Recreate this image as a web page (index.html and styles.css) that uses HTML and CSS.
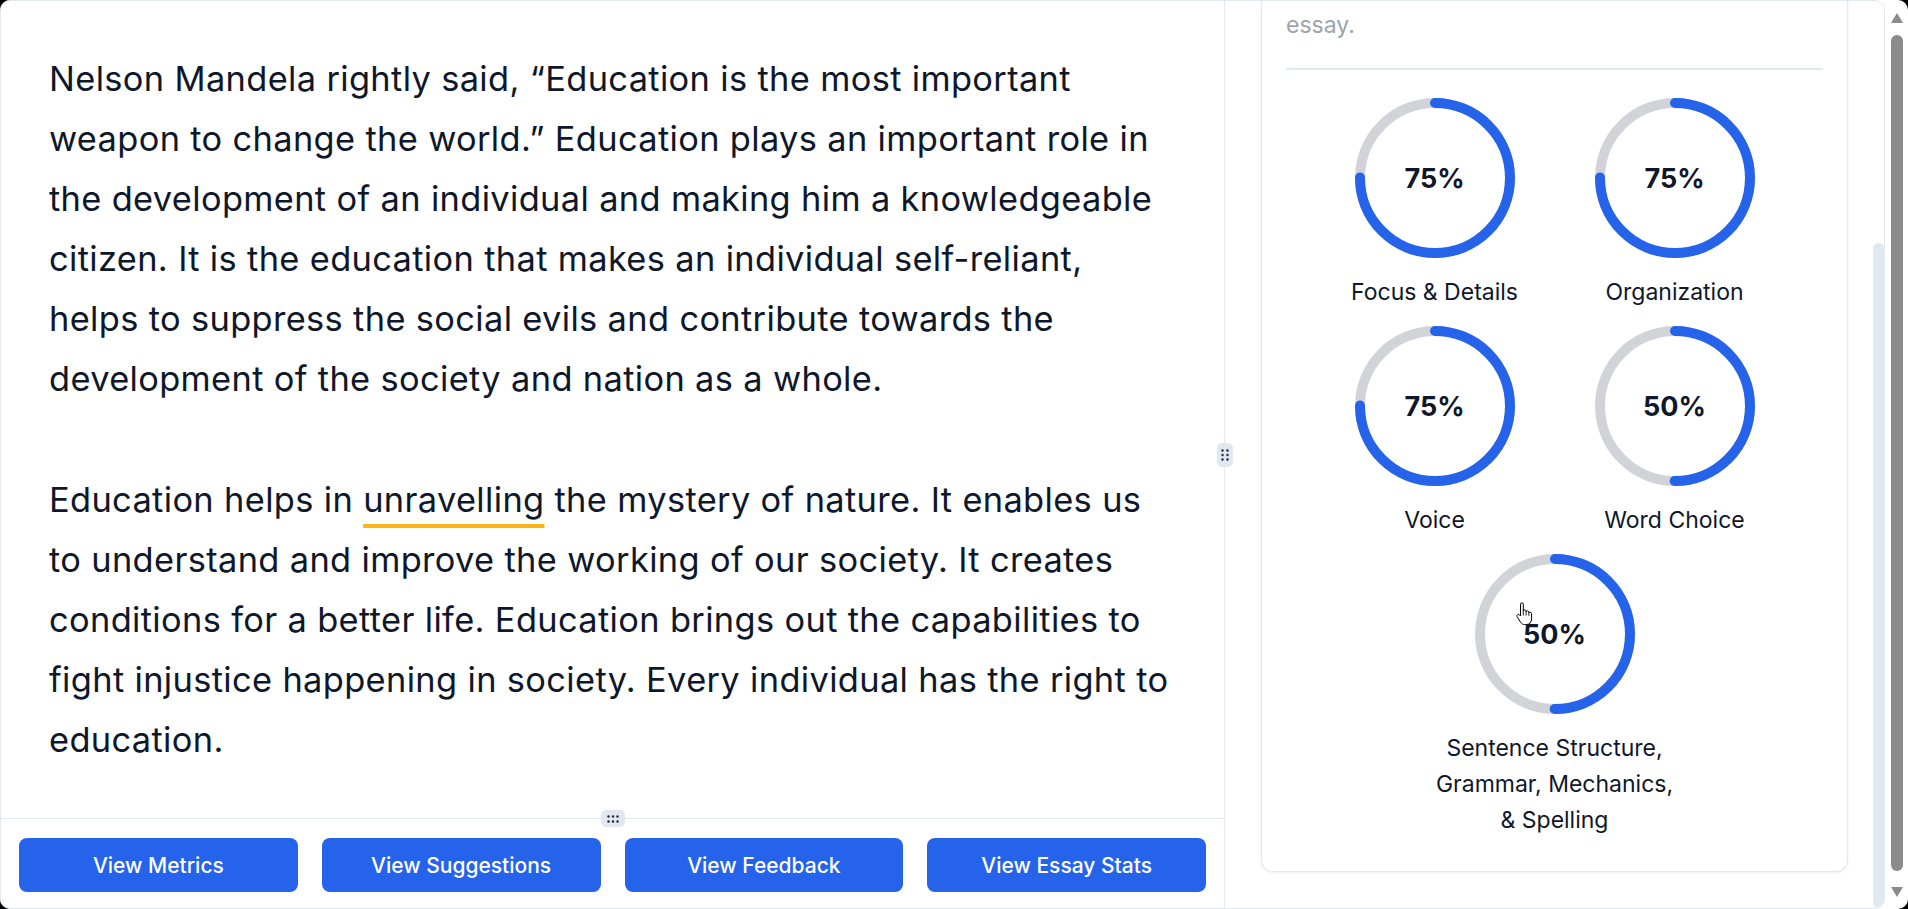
FILE: index.html
```html
<!DOCTYPE html>
<html lang="en">
<head>
<meta charset="utf-8">
<title>Essay Review</title>
<link rel="stylesheet" href="styles.css">
</head>
<body>
<div class="window">
  <div class="app">
    <section class="editor">
      <div class="essay">
        <p>Nelson Mandela rightly said, “Education is the most important weapon to change the world.” Education plays an important role in the development of an individual and making him a knowledgeable citizen. It is the education that makes an individual self-reliant, helps to suppress the social evils and contribute towards the development of the society and nation as a whole.</p>
        <p>Education helps in <span class="flag">unravelling</span> the mystery of nature. It enables us to understand and improve the working of our society. It creates conditions for a better life. Education brings out the capabilities to fight injustice happening in society. Every individual has the right to education.</p>
      </div>
      <div class="hsplit">
        <span class="grip grip-h">
          <svg width="12" height="8" viewBox="0 0 12 8"><g fill="#1e293b"><circle cx="1.5" cy="1.5" r="1.2"/><circle cx="6" cy="1.5" r="1.2"/><circle cx="10.5" cy="1.5" r="1.2"/><circle cx="1.5" cy="6.5" r="1.2"/><circle cx="6" cy="6.5" r="1.2"/><circle cx="10.5" cy="6.5" r="1.2"/></g></svg>
        </span>
      </div>
      <div class="actions">
        <button class="btn">View Metrics</button>
        <button class="btn">View Suggestions</button>
        <button class="btn">View Feedback</button>
        <button class="btn">View Essay Stats</button>
      </div>
    </section>
    <div class="vsplit">
      <span class="grip grip-v">
        <svg width="8" height="12" viewBox="0 0 8 12"><g fill="#1e293b"><circle cx="1.5" cy="1.5" r="1.2"/><circle cx="6.5" cy="1.5" r="1.2"/><circle cx="1.5" cy="6" r="1.2"/><circle cx="6.5" cy="6" r="1.2"/><circle cx="1.5" cy="10.5" r="1.2"/><circle cx="6.5" cy="10.5" r="1.2"/></g></svg>
      </span>
    </div>
    <aside class="pane">
      <div class="pane-scroll">
        <div class="card">
          <p class="intro">Each score below shows how well the writing meets the rubric for that trait, based on a full review of the<br>essay.</p>
          <hr class="rule">
          <div class="charts">
            <div class="chart">
              <div class="ring">
                <svg width="160" height="160" viewBox="0 0 160 160"><circle class="track" cx="80" cy="80" r="75"/><circle class="bar" cx="80" cy="80" r="75" stroke-dasharray="353.43 471.24"/></svg>
                <span class="pct">75%</span>
              </div>
              <div class="label">Focus &amp; Details</div>
            </div>
            <div class="chart">
              <div class="ring">
                <svg width="160" height="160" viewBox="0 0 160 160"><circle class="track" cx="80" cy="80" r="75"/><circle class="bar" cx="80" cy="80" r="75" stroke-dasharray="353.43 471.24"/></svg>
                <span class="pct">75%</span>
              </div>
              <div class="label">Organization</div>
            </div>
            <div class="chart">
              <div class="ring">
                <svg width="160" height="160" viewBox="0 0 160 160"><circle class="track" cx="80" cy="80" r="75"/><circle class="bar" cx="80" cy="80" r="75" stroke-dasharray="353.43 471.24"/></svg>
                <span class="pct">75%</span>
              </div>
              <div class="label">Voice</div>
            </div>
            <div class="chart">
              <div class="ring">
                <svg width="160" height="160" viewBox="0 0 160 160"><circle class="track" cx="80" cy="80" r="75"/><circle class="bar" cx="80" cy="80" r="75" stroke-dasharray="235.62 471.24"/></svg>
                <span class="pct">50%</span>
              </div>
              <div class="label">Word Choice</div>
            </div>
            <div class="chart">
              <div class="ring">
                <svg width="160" height="160" viewBox="0 0 160 160"><circle class="track" cx="80" cy="80" r="75"/><circle class="bar" cx="80" cy="80" r="75" stroke-dasharray="235.62 471.24"/></svg>
                <span class="pct">50%</span>
              </div>
              <div class="label">Sentence Structure,<br>Grammar, Mechanics,<br>&amp; Spelling</div>
            </div>
          </div>
        </div>
      </div>
      <div class="inner-track"><div class="inner-thumb"></div></div>
    </aside>
  </div>
  <div class="page-bar">
    <span class="arrow-up"></span>
    <span class="page-thumb"></span>
    <span class="arrow-down"></span>
  </div>
  <svg class="cursor" width="19" height="25" viewBox="0 0 19 25">
    <path d="M5.5 2.2c0-.8.6-1.4 1.4-1.4s1.4.6 1.4 1.4v6.8c.1-.7.7-1.2 1.4-1.2.8 0 1.4.6 1.4 1.4v.6c.2-.6.8-1 1.4-1 .8 0 1.4.6 1.4 1.4v.8c.2-.5.7-.8 1.3-.8.8 0 1.4.6 1.4 1.4v5.4c0 3.1-2.3 5.6-5.3 5.6h-1.6c-1.7 0-3.2-.9-4.1-2.3L2.1 14.6c-.4-.7-.2-1.5.5-1.9.6-.4 1.4-.3 1.9.2l1 1.1V2.2z" fill="#fff" stroke="#000" stroke-width="1" stroke-linejoin="round"/>
    <path d="M8.3 9v4.2M11.1 10v3.2M13.9 11v2.4" stroke="#000" stroke-width="0.9" stroke-linecap="round"/>
  </svg>
</div>
</body>
</html>
```

FILE: styles.css
```css
html, body {
  margin: 0;
  padding: 0;
  height: 100%;
  background: #000;
  overflow: hidden;
}

.window {
  position: relative;
  width: 1908px;
  height: 909px;
  background: #fff;
  border-radius: 10px;
  overflow: hidden;
  display: flex;
  font-family: Inter, "Liberation Sans", sans-serif;
  color: #0f172a;
}

.app {
  width: 1885px;
  flex-shrink: 0;
  display: flex;
  border: 1px solid #e2e8f0;
  border-radius: 10px;
  overflow: hidden;
  box-sizing: border-box;
}

.editor {
  width: 1223px;
  flex-shrink: 0;
  display: flex;
  flex-direction: column;
}

.essay {
  flex: 1;
  min-height: 0;
  padding: 48px 50px 0 48px;
  font-size: 34.4px;
  line-height: 60px;
  letter-spacing: 0.35px;
  color: #0f172a;
}

.essay p {
  margin: 0 0 61px;
}

.flag {
  text-decoration: underline;
  text-decoration-color: #fbb41a;
  text-decoration-thickness: 4px;
  text-underline-offset: 12px;
}

.hsplit {
  height: 1px;
  background: #e2e8f0;
  display: flex;
  justify-content: center;
  align-items: center;
}

.grip {
  flex-shrink: 0;
  background: #e2e8f0;
  border-radius: 5px;
  display: flex;
  align-items: center;
  justify-content: center;
}

.grip-h {
  width: 24px;
  height: 17px;
}

.grip-v {
  width: 16px;
  height: 24px;
}

.actions {
  height: 89px;
  box-sizing: border-box;
  padding: 19px 18px 16px;
  display: flex;
  gap: 24px;
}

.btn {
  flex: 1;
  height: 54px;
  border: 0;
  border-radius: 8px;
  background: #2563eb;
  color: #fff;
  font-family: Inter, "Liberation Sans", sans-serif;
  font-size: 21px;
  font-weight: 500;
}

.vsplit {
  width: 1px;
  flex-shrink: 0;
  background: #e2e8f0;
  display: flex;
  justify-content: center;
  align-items: center;
}

.pane {
  flex: 1;
  min-width: 0;
  display: flex;
}

.pane-scroll {
  flex: 1;
  min-width: 0;
  display: flex;
  flex-direction: column;
  justify-content: flex-end;
  overflow: hidden;
  padding: 0 25px 36px 36px;
}

.card {
  flex-shrink: 0;
  background: #fff;
  border: 1px solid #e5e7eb;
  border-radius: 12px;
  box-shadow: 0 1px 3px rgba(15, 23, 42, 0.08);
  padding: 0 24px 33px;
}

.intro {
  margin: 0 0 27px;
  font-size: 23px;
  line-height: 32px;
  color: #9ca3af;
}

.rule {
  border: 0;
  height: 2px;
  background: #e2e8f0;
  margin: 0 0 28px;
}

.charts {
  display: flex;
  flex-wrap: wrap;
  justify-content: center;
  row-gap: 16px;
}

.chart {
  width: 240px;
  display: flex;
  flex-direction: column;
  align-items: center;
  gap: 16px;
}

.ring {
  display: grid;
  place-items: center;
  width: 160px;
  height: 160px;
}

.ring svg,
.ring .pct {
  grid-area: 1 / 1;
}

.ring svg {
  transform: rotate(-90deg);
}

.track {
  fill: none;
  stroke: #d1d3d8;
  stroke-width: 10;
}

.bar {
  fill: none;
  stroke: #2563eb;
  stroke-width: 10;
  stroke-linecap: round;
}

.pct {
  font-size: 27px;
  font-weight: 700;
  color: #0f172a;
}

.label {
  font-size: 23px;
  line-height: 36px;
  text-align: center;
  color: #0f172a;
}

.inner-track {
  width: 11px;
  flex-shrink: 0;
  padding-top: 242px;
  display: flex;
  flex-direction: column;
}

.inner-thumb {
  flex: 1;
  background: #e2e8f0;
  border-radius: 6px;
}

.page-bar {
  flex: 1;
  display: flex;
  flex-direction: column;
  align-items: center;
  padding: 13px 0 12px;
  box-sizing: border-box;
}

.arrow-up,
.arrow-down {
  width: 0;
  height: 0;
  border-left: 6.5px solid transparent;
  border-right: 6.5px solid transparent;
}

.arrow-up {
  border-bottom: 10px solid #8b8b8b;
  margin-bottom: 12px;
}

.arrow-down {
  border-top: 10px solid #8b8b8b;
}

.page-thumb {
  flex: 1;
  width: 12px;
  background: #8b8b8b;
  border-radius: 6px;
  margin-bottom: 16px;
}

.cursor {
  position: absolute;
  left: 1515px;
  top: 602px;
}
```
